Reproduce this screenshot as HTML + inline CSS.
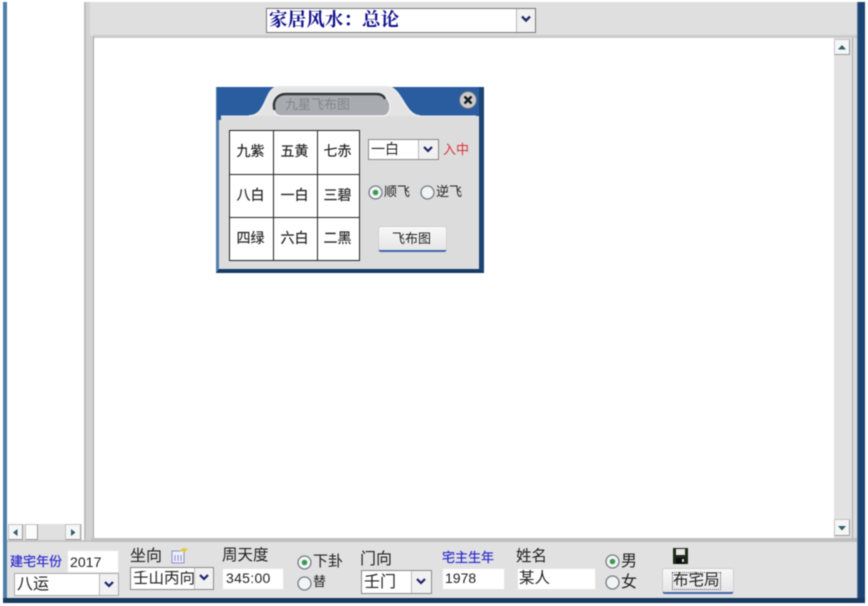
<!DOCTYPE html>
<html><head><meta charset="utf-8">
<style>
html,body{margin:0;padding:0;background:#fff}
#p{position:relative;width:868px;height:606px;overflow:hidden;background:#fff;font-family:"Liberation Sans","Noto Sans CJK SC",sans-serif;color:#222;filter:blur(.45px)}
#p div{position:absolute;box-sizing:border-box}
.t{white-space:nowrap;line-height:1}
.in{background:#fff;border:1px solid #e4e4e4}
.sel{background:#fff;border:1px solid #8a8a8a}
.ar{background:#f1f1f1;border-left:1px solid #bbb}
.btn{background:linear-gradient(#f8f8f8,#e6e6e6);border:1px solid #cfcfcf;border-bottom:2px solid #3f66ad;border-radius:3px}
.sb{background:#f6f6f6;border:1px solid #c4c4c4;border-right-color:#9a9a9a;border-bottom-color:#9a9a9a}
.c{border-right:1px solid #222;border-bottom:1px solid #222;font-size:14px;text-align:center;line-height:41px;padding-right:2px;-webkit-text-stroke:.15px #222}
.m{font-family:'Liberation Sans',sans-serif;font-size:14px}
svg{position:absolute;overflow:visible}
</style></head><body><div id="p">
<!-- frame -->
<div style="left:3px;top:2px;width:4px;height:540px;background:#4f7fa8"></div>
<div style="left:84px;top:2px;width:10px;height:538px;background:#d2d2d2;border-left:2px solid #bdbdbd;border-right:1px solid #a8a8a8"></div>
<div style="left:90px;top:2px;width:767px;height:34px;background:#dfdfdf"></div>
<div style="left:94px;top:35px;width:763px;height:3px;background:#cbcbcb"></div>
<div style="left:94px;top:38px;width:740px;height:500px;background:#fff"></div>
<div style="left:834px;top:38px;width:18px;height:500px;background:#e2e2e2"></div>
<div style="left:852px;top:38px;width:5px;height:502px;background:#dcdcdc;border-left:1px solid #aaa"></div>
<div style="left:91px;top:538px;width:766px;height:4px;background:#bfbfbf"></div>
<div style="left:857px;top:2px;width:8px;height:601px;background:#1c4473;border-left:1px solid #5a7a9e"></div>
<div style="left:6px;top:542px;width:851px;height:56px;background:#e1e1e1"></div>
<div style="left:3px;top:540px;width:4px;height:58px;background:#4f7fa8"></div>
<div style="left:3px;top:598px;width:862px;height:5px;background:#17395f"></div>
<div style="left:7px;top:540px;width:84px;height:2px;background:#c4c4c4"></div>
<!-- top select -->
<div class="sel" style="left:266px;top:8px;width:270px;height:25px;border-color:#777"></div>
<div class="t" style="left:269px;top:11px;font-size:18.6px;line-height:19px;font-weight:bold;color:#10108c;font-family:'Liberation Serif','Noto Serif CJK SC',serif">家居风水：总论</div>
<div class="ar" style="left:516px;top:9px;width:19px;height:23px"></div>
<svg style="left:521px;top:15px" width="10" height="8"><path d="M1 1.5L5 5.5L9 1.5" fill="none" stroke="#2a2a6a" stroke-width="2.4"/></svg>
<!-- right scrollbar -->
<div class="sb" style="left:834px;top:39px;width:16px;height:16px"></div>
<svg style="left:838px;top:45px" width="8" height="5"><path d="M0 4.5L4 0L8 4.5Z" fill="#2d5f6e"/></svg>
<div class="sb" style="left:834px;top:519px;width:16px;height:17px"></div>
<svg style="left:838px;top:526px" width="8" height="5"><path d="M0 0L8 0L4 4.5Z" fill="#2d5f6e"/></svg>
<!-- left scrollbar -->
<div style="left:8px;top:524px;width:74px;height:16px;background:#e0e0e0"></div>
<div class="sb" style="left:8px;top:524px;width:15px;height:16px"></div>
<svg style="left:13px;top:529px" width="5" height="7"><path d="M4.5 0L0 3.5L4.5 7Z" fill="#2d5f6e"/></svg>
<div class="sb" style="left:25px;top:524px;width:13px;height:16px;background:#fbfbfb"></div>
<div class="sb" style="left:65px;top:524px;width:16px;height:16px"></div>
<svg style="left:71px;top:529px" width="5" height="7"><path d="M0 0L4.5 3.5L0 7Z" fill="#2d5f6e"/></svg>
<!-- dialog -->
<div style="left:216px;top:87px;width:268px;height:186px;background:#dcdcdc;border:3px solid #2a5a94;border-top:0;border-right:5px solid #1c4473;border-bottom:4px solid #143a66;border-left-color:#4f80b0"></div>
<svg style="left:216px;top:86px" width="268" height="34">
<path d="M1 1H263V30H204C188 30 186 1 171 1H63C48 1 52 30 33 30H5V34H1Z" fill="#2a5da0"/>
<path d="M263 1H267V34H263Z" fill="#1c4473"/>
<path d="M33 30C52 30 48 1 63 1H171C186 1 188 30 204 30" fill="#e4e4e4" stroke="#e8eaec" stroke-width="2"/>
<path d="M5 30H33M204 30H260" stroke="#eceef0" stroke-width="1"/>
<path d="M67 7H160C168 7 174 14 174 20C174 26 172 30 166 30H66C60 30 57 26 57 19C57 12 62 7 67 7Z" fill="#a8acb0" stroke="#f0f0f0" stroke-width="1.4"/>
<path d="M58.5 24C56 14 62 8 70 8H160C165 8 168 10 169 13" fill="none" stroke="#33363a" stroke-width="2.4"/>
</svg>
<div class="t" style="left:285px;top:98px;font-size:13px;color:#83878b">九星飞布图</div>
<svg style="left:459px;top:91px" width="18" height="18"><circle cx="9" cy="9" r="8.5" fill="#c9ccd0" stroke="#6d7075"/><path d="M5.5 5.5L12.5 12.5M12.5 5.5L5.5 12.5" stroke="#1a1a1a" stroke-width="2.4"/></svg>
<!-- grid -->
<div style="left:229px;top:130px;width:131px;height:131px;border:1px solid #222;border-right:0;border-bottom:0;background:#fff"></div>
<div class="c" style="left:230px;top:131px;width:44px;height:44px">九紫</div>
<div class="c" style="left:274px;top:131px;width:44px;height:44px">五黄</div>
<div class="c" style="left:318px;top:131px;width:42px;height:44px">七赤</div>
<div class="c" style="left:230px;top:175px;width:44px;height:43px">八白</div>
<div class="c" style="left:274px;top:175px;width:44px;height:43px">一白</div>
<div class="c" style="left:318px;top:175px;width:42px;height:43px">三碧</div>
<div class="c" style="left:230px;top:218px;width:44px;height:43px">四绿</div>
<div class="c" style="left:274px;top:218px;width:44px;height:43px">六白</div>
<div class="c" style="left:318px;top:218px;width:42px;height:43px">二黑</div>
<!-- dialog controls -->
<div class="sel" style="left:368px;top:139px;width:71px;height:21px"></div>
<div class="t" style="left:371px;top:142px;font-size:14px">一白</div>
<div class="ar" style="left:418px;top:140px;width:20px;height:19px"></div>
<svg style="left:423px;top:146px" width="10" height="7"><path d="M1 1L5 5L9 1" fill="none" stroke="#20206e" stroke-width="2.2"/></svg>
<div class="t" style="left:443px;top:143px;font-size:13px;color:#d8343c">入中</div>
<svg style="left:368px;top:185px" width="15" height="15"><circle cx="7.5" cy="7.5" r="6.5" fill="#f4f4f4" stroke="#6f7f88" stroke-width="1.3"/><circle cx="7.5" cy="7.5" r="2.8" fill="#3c9a55"/></svg>
<div class="t" style="left:384px;top:185px;font-size:13px">顺飞</div>
<svg style="left:420px;top:185px" width="15" height="15"><circle cx="7.5" cy="7.5" r="6.5" fill="#f4f4f4" stroke="#6f7f88" stroke-width="1.3"/></svg>
<div class="t" style="left:436px;top:185px;font-size:13px">逆飞</div>
<div class="btn" style="left:378px;top:226px;width:69px;height:26px"></div>
<div class="t" style="left:392px;top:232px;font-size:13px">飞布图</div>
<!-- bottom bar -->
<div class="t" style="left:10px;top:555px;font-size:13px;color:#2a2ad0;-webkit-text-stroke:.2px #2a2ad0">建宅年份</div>
<div class="in" style="left:67px;top:550px;width:52px;height:23px"></div>
<div class="t m" style="left:70px;top:555px;letter-spacing:.1px">2017</div>
<div class="sel" style="left:14px;top:573px;width:105px;height:23px;border-color:#aaa"></div>
<div class="t" style="left:17px;top:577px;font-size:16px">八运</div>
<div class="ar" style="left:99px;top:574px;width:19px;height:21px"></div>
<svg style="left:104px;top:581px" width="10" height="7"><path d="M1 1L5 5L9 1" fill="none" stroke="#20206e" stroke-width="2.2"/></svg>
<div class="t" style="left:130px;top:549px;font-size:16px">坐向</div>
<svg style="left:171px;top:547px" width="18" height="17"><rect x="1" y="4" width="12" height="12" fill="#eef" stroke="#8a8fc0"/><path d="M4 8V14M7 8V14M10 8V14" stroke="#8a8fc0"/><path d="M8 4L12 1L17 2L14 5Z" fill="#e8c840"/></svg>
<div class="sel" style="left:130px;top:567px;width:84px;height:23px"></div>
<div class="t" style="left:133px;top:571px;font-size:15.5px;width:61px;overflow:hidden">壬山丙向</div>
<div class="ar" style="left:194px;top:568px;width:19px;height:21px"></div>
<svg style="left:199px;top:574px" width="10" height="7"><path d="M1 1L5 5L9 1" fill="none" stroke="#20206e" stroke-width="2.2"/></svg>
<div class="t" style="left:222px;top:548px;font-size:15.5px">周天度</div>
<div class="in" style="left:222px;top:568px;width:62px;height:22px"></div>
<div class="t m" style="left:226px;top:571px;letter-spacing:.3px">345:00</div>
<svg style="left:297px;top:555px" width="15" height="15"><circle cx="7.5" cy="7.5" r="6.5" fill="#f4f4f4" stroke="#6f7f88" stroke-width="1.3"/><circle cx="7.5" cy="7.5" r="2.8" fill="#3c9a55"/></svg>
<div class="t" style="left:313px;top:554px;font-size:15px">下卦</div>
<svg style="left:297px;top:576px" width="15" height="15"><circle cx="7.5" cy="7.5" r="6.5" fill="#f4f4f4" stroke="#6f7f88" stroke-width="1.3"/></svg>
<div class="t" style="left:313px;top:575px;font-size:13px">替</div>
<div class="t" style="left:360px;top:552px;font-size:16px">门向</div>
<div class="sel" style="left:361px;top:570px;width:71px;height:24px"></div>
<div class="t" style="left:364px;top:575px;font-size:16px">壬门</div>
<div class="ar" style="left:411px;top:571px;width:20px;height:22px"></div>
<svg style="left:416px;top:578px" width="10" height="7"><path d="M1 1L5 5L9 1" fill="none" stroke="#20206e" stroke-width="2.2"/></svg>
<div class="t" style="left:442px;top:551px;font-size:13px;color:#2a2ad0;-webkit-text-stroke:.2px #2a2ad0">宅主生年</div>
<div class="in" style="left:442px;top:568px;width:63px;height:22px"></div>
<div class="t m" style="left:445px;top:571px">1978</div>
<div class="t" style="left:516px;top:549px;font-size:15.5px">姓名</div>
<div class="in" style="left:517px;top:568px;width:79px;height:22px"></div>
<div class="t" style="left:519px;top:571px;font-size:15.5px">某人</div>
<svg style="left:605px;top:554px" width="15" height="15"><circle cx="7.5" cy="7.5" r="6.5" fill="#f4f4f4" stroke="#6f7f88" stroke-width="1.3"/><circle cx="7.5" cy="7.5" r="2.8" fill="#3c9a55"/></svg>
<div class="t" style="left:621px;top:554px;font-size:16px">男</div>
<svg style="left:605px;top:575px" width="15" height="15"><circle cx="7.5" cy="7.5" r="6.5" fill="#f4f4f4" stroke="#6f7f88" stroke-width="1.3"/></svg>
<div class="t" style="left:621px;top:575px;font-size:16px">女</div>
<svg style="left:673px;top:548px" width="15" height="16"><path d="M0 0H15V16H0Z" fill="#1e2a18"/><rect x="3" y="1" width="9" height="6" fill="#e8e8e8"/><rect x="3" y="10" width="9" height="6" fill="#0c0c0c"/><rect x="9" y="11" width="2" height="3" fill="#ddd"/></svg>
<div class="btn" style="left:662px;top:568px;width:72px;height:26px"></div>
<div class="t" style="left:673px;top:573px;font-size:15.5px;outline:1px dotted #555;outline-offset:0">布宅局</div>
</div></body></html>
